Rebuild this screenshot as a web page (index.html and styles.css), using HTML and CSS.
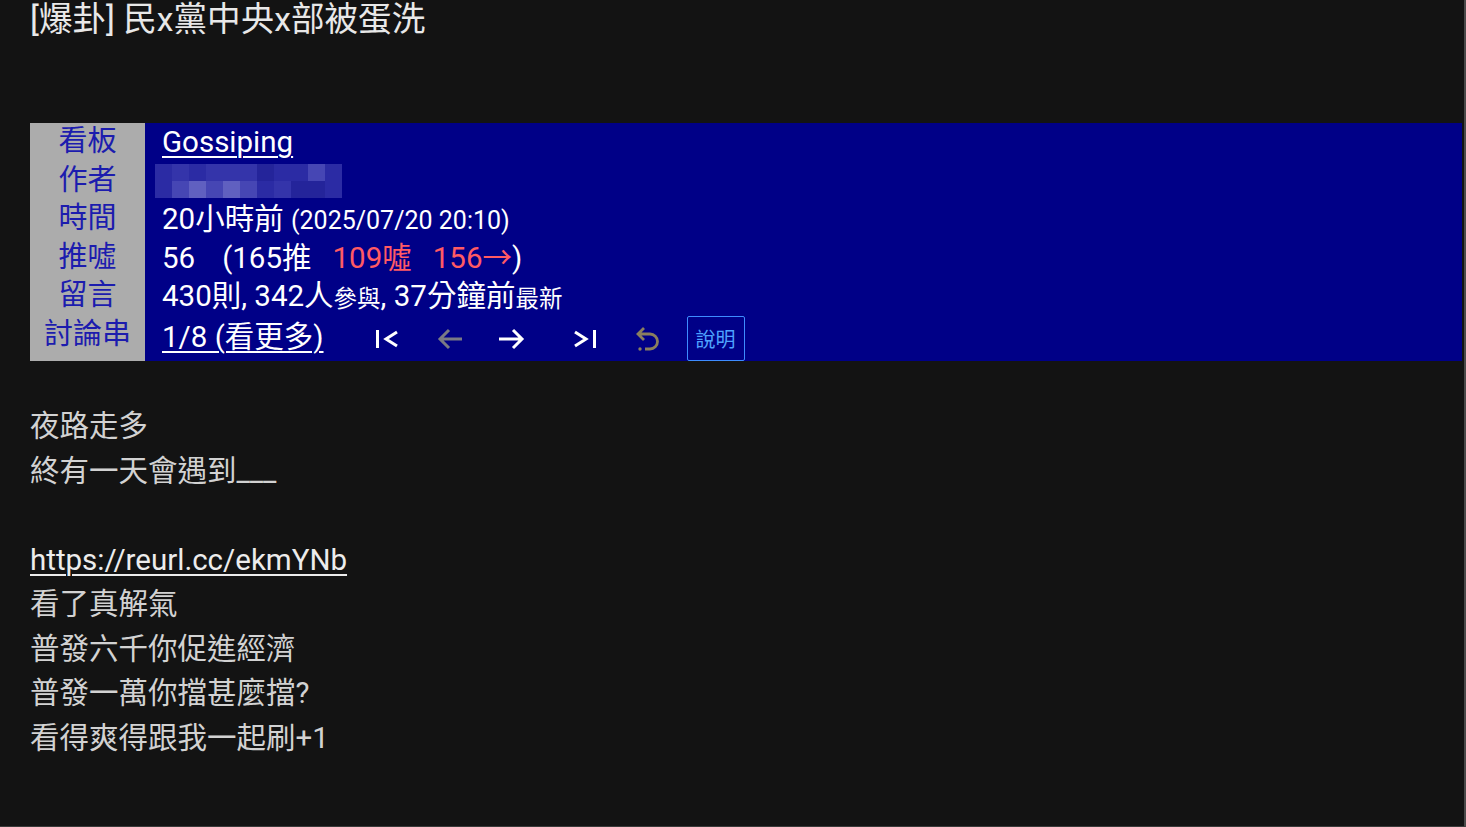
FILE: index.html
```html
<!DOCTYPE html>
<html lang="zh-Hant">
<head>
    <meta charset="UTF-8">
    <meta name="viewport" content="width=device-width, initial-scale=1.0">
    <title>[爆卦] 民x黨中央x部被蛋洗</title>
    <link rel="stylesheet" href="styles.css">
</head>
<body>
    <div class="page">
        <h1 class="title">[爆卦] 民x黨中央x部被蛋洗</h1>

        <div class="meta">
            <div class="label">看板</div>
            <div class="value"><a href="#">Gossiping</a></div>

            <div class="label">作者</div>
            <div class="value author">
                <div class="blur">
                    <span class="s2"></span><span class="s3"></span><span class="s2"></span><span class="s3"></span><span class="s3"></span><span class="s3"></span><span class="s1"></span><span class="s2"></span><span class="s2"></span><span class="s4"></span><span class="s2"></span>
                    <span class="s2"></span><span class="s4"></span><span class="s5"></span><span class="s4"></span><span class="s5"></span><span class="s4"></span><span class="s2"></span><span class="s3"></span><span class="s1"></span><span class="s1"></span><span class="s2"></span>
                </div>
            </div>

            <div class="label">時間</div>
            <div class="value">20小時前 <small>(2025/07/20 20:10)</small></div>

            <div class="label">推噓</div>
            <div class="value">56<span class="gap-l">(165推</span><span class="red gap">109噓</span><span class="red gap">156→</span>)</div>

            <div class="label">留言</div>
            <div class="value">430則, 342人<small class="tiny">參與</small>, 37分鐘前<small class="tiny">最新</small></div>

            <div class="label">討論串</div>
            <div class="value nav">
                <a href="#" class="thread">1/8 (看更多)</a>
                <span class="icon first">
                    <svg width="25" height="22" viewBox="0 0 25 22"><path d="M2.5 2v18M22 4l-11 7 11 7" fill="none" stroke="currentColor" stroke-width="3"/></svg>
                </span>
                <span class="icon dim prev">
                    <svg width="26" height="22" viewBox="0 0 26 22"><path d="M25 11H3M12 2L3 11l9 9" fill="none" stroke="currentColor" stroke-width="3"/></svg>
                </span>
                <span class="icon next">
                    <svg width="27" height="22" viewBox="0 0 27 22"><path d="M1 11h23M15 2l9 9-9 9" fill="none" stroke="currentColor" stroke-width="3"/></svg>
                </span>
                <span class="icon last">
                    <svg width="24" height="22" viewBox="0 0 24 22"><path d="M21.5 2v18M2 4l11 7-11 7" fill="none" stroke="currentColor" stroke-width="3"/></svg>
                </span>
                <span class="icon undo">
                    <svg width="27" height="26" viewBox="0 0 27 26"><path d="M9 2L3 8l6 6M3 8h12a7.5 7.5 0 0 1 0 15h-5" fill="none" stroke="currentColor" stroke-width="2.8"/><circle cx="5" cy="23" r="1.7" fill="currentColor"/></svg>
                </span>
                <button class="help">說明</button>
            </div>
        </div>

        <div class="content">
            <p>夜路走多</p>
            <p>終有一天會遇到___</p>
            <p>&nbsp;</p>
            <p><a href="#">https://reurl.cc/ekmYNb</a></p>
            <p>看了真解氣</p>
            <p>普發六千你促進經濟</p>
            <p>普發一萬你擋甚麼擋?</p>
            <p>看得爽得跟我一起刷+1</p>
        </div>
    </div>
</body>
</html>
```

FILE: styles.css
```css
html, body {
    margin: 0;
    padding: 0;
    background-color: #131313;
}

body {
    font-family: Roboto, "Noto Sans CJK TC", sans-serif;
    color: #d2d2d2;
    height: 827px;
    overflow: hidden;
}

.page {
    box-sizing: border-box;
    width: 1466px;
    height: 827px;
    padding: 0 2px 0 30px;
    border-right: 2px solid #4a4a4a;
    border-bottom: 1px solid #3a3a3a;
}

.title {
    margin: 0;
    padding-top: 0;
    font-size: 33.6px;
    font-weight: normal;
    line-height: 40px;
    color: #e8e8e8;
}

.meta {
    display: grid;
    grid-template-columns: 115px 1fr;
    grid-template-rows: repeat(5, 38.5px) 45.5px;
    margin-top: 83px;
    background-color: #000087;
}

.label {
    background-color: #acacac;
    color: #1c1cae;
    font-size: 29px;
    text-align: center;
    line-height: 36px;
}

.value {
    color: #fff;
    font-size: 29.5px;
    line-height: 36px;
    padding-left: 17px;
    display: flex;
    align-items: center;
    white-space: pre;
}

.value a {
    color: #fff;
    text-decoration: underline;
    text-underline-offset: 4px;
    text-decoration-thickness: 2px;
}

.value small {
    font-size: 25px;
    margin-top: 3px;
}

.value small.tiny {
    font-size: 23.5px;
    margin-top: 5px;
}

.red {
    color: #ff5a64;
}

.gap-l {
    margin-left: 27px;
}

.gap {
    margin-left: 21px;
}

.author {
    padding-left: 10px;
}

.blur {
    display: grid;
    grid-template-columns: repeat(11, 17px);
    grid-template-rows: 17px 17px;
}

.s1 { background-color: #24249a; }
.s2 { background-color: #2b2ba4; }
.s3 { background-color: #3434aa; }
.s4 { background-color: #4646b4; }
.s5 { background-color: #6060c0; }

.nav {
    align-items: center;
}

.nav .thread {
    margin-right: 51px;
    margin-top: -2px;
}

.icon {
    color: #fff;
    display: flex;
    align-items: center;
    margin-top: 1px;
}

.icon.first { margin-right: 37px; }
.icon.prev { margin-right: 35px; }
.icon.next { margin-right: 48px; }
.icon.last { margin-right: 38px; }

.icon.dim {
    color: #7a7a84;
}

.icon.undo {
    color: #8a7f5e;
    margin-right: 25px;
    margin-top: 2px;
}

.help {
    box-sizing: border-box;
    height: 45.5px;
    width: 58px;
    padding: 0;
    background-color: transparent;
    border: 1px solid #3d8cff;
    border-radius: 2px;
    color: #4ea2ff;
    font-family: "Noto Sans CJK TC", sans-serif;
    font-size: 20px;
}

.content {
    margin-top: 43px;
    font-size: 29.5px;
    line-height: 44.5px;
}

.content p {
    margin: 0;
}

.content a {
    color: #ececec;
    text-decoration: underline;
    text-underline-offset: 4px;
    text-decoration-thickness: 2px;
}
```
